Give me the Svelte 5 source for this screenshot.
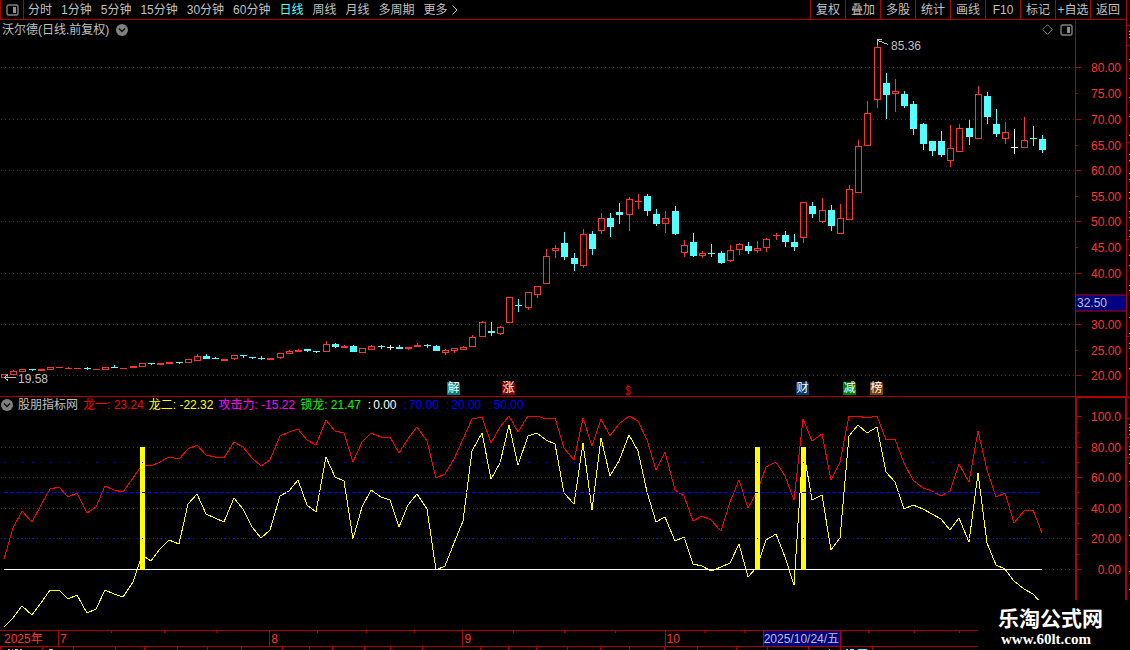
<script>
  const periods = ['分时', '1分钟', '5分钟', '15分钟', '30分钟', '60分钟', '日线', '周线', '月线', '多周期'];
  const tools = ['复权', '叠加', '多股', '统计', '画线', 'F10', '标记', '+自选', '返回'];
  let active = $state('日线');

  // Drawing space of the two plots; both stretch with the window.
  const W = 1075;
  const PRICE_H = 376;
  const IND_H = 233;
  const STEP = 9.186;
  const px = (i) => Math.round(4 + STEP * i);

  // kind, body top, body bottom, high, low (plot rows)
  const candles = [
    'r 354 358', 'r 351 355 350', 'r 349 352', 'c 349 350 349 351', 'r 349 351', 'r 347 350', 'r 347 348',
    'r 348 349 347', 'r 348 349', 'c 348 349 347 350', 'r 349 350', 'r 347 350', 'c 347 348 345', 'r 348 349',
    'r 346 348', 'r 343 347', 'c 343 344 343 345', 'r 343 345', 'r 342 344', 'c 342 343 342 344', 'r 339 343',
    'r 336 341 334', 'c 336 339 334', 'c 338 339 337', 'r 339 341', 'r 335 339 335 340', 'c 335 336 335 338',
    'c 337 338 337 339', 'c 338 339 336 340', 'r 338 340', 'r 333 338 333 339', 'r 331 334 330', 'r 330 332 329',
    'c 329 331 329 332', 'c 331 332 331 333', 'r 324 332 321', 'c 324 327 323 328', 'r 326 328 325',
    'c 326 332 325', 'r 328 333', 'r 326 330 325', 'c 326 327 325 329', 'w 327 328 325 330', 'c 327 329 325',
    'r 327 329 327 330', 'r 325 327 323', 'c 325 326 324 328', 'c 326 331 325', 'r 330 333 329 335',
    'r 328 331 328 333', 'r 327 330 326', 'r 317 327 315', 'r 302 317 301', 'c 311 313 302 316',
    'r 307 314 306 315', 'r 277 303', 'c 285 286 279 292', 'r 272 288 272 290', 'r 266 275 266 278',
    'r 236 264 229', 'r 228 231 225 238', 'c 223 237 212 240', 'c 238 244 233 251', 'r 214 246 209 248',
    'c 214 229 211 235', 'r 198 211 193 214', 'c 198 207 193 217', 'c 192 195 183 204', 'r 179 195 177 211',
    'r 181 182 174 189', 'c 176 191 174 196', 'c 194 204 189 206', 'r 198 204 191 213', 'c 191 214 186 215',
    'r 225 233 220 237', 'c 222 236 213 237', 'r 233 236 231 238', 'c 233 234 224 237', 'c 233 243 231 244',
    'r 230 241 225 242', 'r 224 230 223 235', 'c 226 231 222 234', 'r 228 231 221 233', 'r 219 228 218 232',
    'r 215 216 213 220', 'c 215 222 211 227', 'c 222 227 214 231', 'r 182 218 182 223', 'c 186 194 182 198',
    'r 190 202 178 203', 'c 190 206 185 211', 'r 198 214 184', 'r 169 200 165', 'r 126 173 120', 'r 93 126 81',
    'r 27 80 23 88', 'c 63 75 53 99', 'r 71 74 59 92', 'c 74 86 71 88', 'c 84 109 81 115', 'c 104 124 103 130',
    'c 121 131 121 136', 'c 121 135 111 137', 'r 128 141 105 147', 'r 108 132 104', 'c 108 117 100 125',
    'r 74 119 66', 'c 76 97 72 104', 'c 104 114 89 117', 'r 112 119 102 124', 'w 127 128 109 134',
    'r 120 128 97', 'c 118 119 106 126', 'c 119 130 115 133'
  ].map((row, i) => {
    const [kind, t, b, h, l] = row.split(' ');
    const top = +t, bottom = +b;
    return { kind, x: px(i), top, bottom, high: h ? +h : top, low: l ? +l : bottom };
  });

  // Oscillator samples, in thirds of a plot row below the legend's top edge
  const fast = [
    476, 385, 334, 367, 315, 266, 262, 290, 278, 339, 320, 257, 270, 275, 235, 195, 199, 185, 172, 178, 147, 136,
    166, 170, 175, 127, 142, 174, 199, 180, 107, 97, 88, 121, 135, 61, 93, 98, 185, 127, 100, 112, 112, 160, 116,
    82, 122, 235, 221, 178, 118, 56, 52, 128, 80, 49, 97, 49, 49, 58, 55, 145, 181, 53, 139, 58, 109, 73, 49, 62,
    121, 211, 157, 271, 287, 363, 349, 360, 394, 307, 239, 325, 275, 200, 187, 229, 301, 58, 124, 103, 241, 187,
    49, 49, 55, 49, 121, 118, 190, 241, 265, 274, 289, 274, 193, 247, 94, 209, 292, 280, 370, 334, 331, 398
  ];
  const slow = [
    680, 655, 619, 646, 610, 569, 569, 596, 586, 639, 626, 571, 583, 592, 545, 465, 484, 448, 421, 433, 313, 281,
    343, 353, 367, 295, 328, 382, 413, 390, 287, 274, 241, 315, 337, 172, 232, 244, 417, 321, 270, 291, 299, 382,
    316, 281, 328, 511, 497, 430, 363, 154, 100, 238, 190, 76, 196, 109, 100, 119, 131, 278, 313, 130, 331, 115,
    229, 184, 106, 154, 277, 367, 350, 424, 410, 492, 497, 514, 502, 488, 433, 532, 500, 421, 403, 472, 556, 140,
    301, 286, 451, 415, 109, 76, 100, 82, 217, 247, 328, 316, 328, 341, 358, 391, 355, 427, 220, 430, 496, 506,
    544, 568, 583, 612
  ];
  const toPoints = (list) => list.map((v, i) => `${px(i)},${Math.round(v / 3) + 3}`).join(' ');

  const priceTicks = [
    ['80.00', 47], ['75.00', 73], ['70.00', 99], ['65.00', 125], ['60.00', 150], ['55.00', 176],
    ['50.00', 201], ['45.00', 227], ['40.00', 253], ['30.00', 304], ['25.00', 330], ['20.00', 355]
  ].map(([label, y]) => ({ label, y, major: label.endsWith('0.00') }));
  const indTicks = [['100.0', 19], ['80.00', 50], ['60.00', 80], ['40.00', 111], ['20.00', 141], ['0.00', 172]];
  const indMinor = [35, 65, 95, 126, 157];

  const legend = [
    ['龙一: 23.24', 'red'], ['龙二: -22.32', 'yellow'], ['攻击力: -15.22', 'magenta'], ['锁龙: 21.47', 'lime']
  ];
  const levels = [['0.00', 'white'], ['70.00', 'blue'], ['20.00', 'blue'], ['50.00', 'blue']];

  const badges = [['解', 453, '#008080'], ['涨', 508, '#800000'], ['财', 802, '#003c70'], ['减', 849, '#008000'], ['榜', 876, '#804000']];

  const months = [['2025年', 58], ['7', 211], ['8', 193], ['9', 202], ['10', 314]];
  const weekTicks = [111, 164, 216, 317, 366, 414, 513, 563, 614, 703, 743, 867, 913, 958];
  const tabTicks = [0, 42, 73, 115, 144, 177, 207, 241, 282, 309, 332, 364, 390, 422, 480, 508, 536, 566, 599, 628, 663, 696, 735, 766, 807, 839, 871];
  const sideRules = [25, 45, 142, 239, 336, 397, 418, 437, 457];
  const sideMarks = [31, 34, 37, 59, 78, 97, 116, 135, 154, 160, 173, 179, 192, 198, 211, 217, 230, 236, 255, 265, 285, 290, 317, 333, 343, 348, 368, 424, 427, 430, 434, 446, 449, 454, 463, 481, 517, 535, 571, 589];
</script>

{#snippet panelIcon()}
  <svg width="13" height="12" viewBox="0 0 13 12" aria-hidden="true">
    <rect x="1" y="1" width="11" height="10" rx="1.5" fill="none" stroke="#808080" stroke-width="1.4" />
    <rect x="7" y="3" width="3" height="6" fill="#909090" />
  </svg>
{/snippet}

{#snippet roundIcon()}
  <svg width="12" height="12" viewBox="0 0 12 12" aria-hidden="true">
    <circle cx="6" cy="6" r="6" fill="#808080" />
    <path d="M3 4.5 6 7.5 9 4.5" fill="none" stroke="#111" stroke-width="1.4" />
  </svg>
{/snippet}

<div class="app">
  <div class="main">
    <header class="toolbar">
      <button class="panel-toggle" aria-label="侧栏">{@render panelIcon()}</button>
      <nav class="periods">
        {#each periods as p}
          <button class:active={active === p} onclick={() => (active = p)}>{p}</button>
        {/each}
        <button class="more">更多
          <svg width="6" height="10" viewBox="0 0 6 10" aria-hidden="true"><path d="M.5 .5 5 5 .5 9.5" fill="none" stroke="#c0c0c0" /></svg>
        </button>
      </nav>
      <div class="tools">
        {#each tools as t}<button>{t}</button>{/each}
      </div>
    </header>

    <section class="pane price">
      <div class="plot">
        <svg class="canvas" viewBox="0 0 {W} {PRICE_H}" preserveAspectRatio="none" shape-rendering="crispEdges" aria-hidden="true">
          {#each priceTicks.filter((t) => t.major) as t}
            <line x1="1" x2={W} y1={t.y + 0.5} y2={t.y + 0.5} class="dots" />
          {/each}
          {#each candles as c}
            <g class={c.kind}>
              {#if c.high < c.top}<rect x={c.x} y={c.high} width="1" height={c.top - c.high} />{/if}
              {#if c.low > c.bottom}<rect x={c.x} y={c.bottom} width="1" height={c.low - c.bottom} />{/if}
              {#if c.kind === 'r' && c.bottom - c.top > 2}
                <rect class="hollow" x={c.x - 2.5} y={c.top + 0.5} width="6" height={c.bottom - c.top - 1} />
              {:else}
                <rect x={c.x - 3} y={c.top} width="7" height={c.bottom - c.top} />
              {/if}
            </g>
          {/each}
          <path class="pointer" d="M4 357.5H16M8 354.5 4.500 357.500 8 360.500" />
          <path class="pointer" d="M878 20.500 888 24.500M882 19.500H877.500V25" />
          <path d="M630.500 367.500C629.500 365.800 625.800 366 626 368.200C626.200 370.500 630.500 370 630.500 372.500C630.500 375 626.500 375 625.500 373M628 364.500V376M625 376.500H631" fill="none" stroke="#f00" shape-rendering="geometricPrecision" />
        </svg>
        <div class="title">
          <span>沃尔德(日线.前复权)</span>
          <button aria-label="展开">{@render roundIcon()}</button>
          <div class="corner">
            <button aria-label="标注">
              <svg width="11" height="11" viewBox="0 0 11 11" aria-hidden="true"><path d="M5.500 .7 10.300 5.500 5.500 10.300 .7 5.500Z" fill="none" stroke="#808080" /></svg>
            </button>
            <button aria-label="面板">{@render panelIcon()}</button>
          </div>
        </div>
        <span class="mark" style="left:{(18 / W) * 100}%;top:{(359 / PRICE_H) * 100}%">19.58</span>
        <span class="mark" style="left:{(891 / W) * 100}%;top:{(26 / PRICE_H) * 100}%">85.36</span>
        {#each badges as [label, x, color]}
          <span class="badge" style="left:{(x / W) * 100}%;background:{color}">{label}</span>
        {/each}
      </div>
      <div class="axis">
        {#each priceTicks as t}
          <i class:major={t.major} style="top:{(t.y / PRICE_H) * 100}%"></i>
          <span class="label" style="top:{((t.y + 1) / PRICE_H) * 100}%">{t.label}</span>
        {/each}
        <span class="cursor-value" style="top:{(283.5 / PRICE_H) * 100}%">32.50</span>
      </div>
    </section>

    <section class="pane indicator">
      <div class="plot">
        <svg class="canvas" viewBox="0 0 {W} {IND_H}" preserveAspectRatio="none" shape-rendering="crispEdges" aria-hidden="true">
          {#each indTicks.slice(1) as [, y]}
            <line x1="1" x2={W} y1={y + 0.5} y2={y + 0.5} class="dots" />
          {/each}
          <polyline points={toPoints(fast)} fill="none" stroke="#f00" />
          <polyline points={toPoints(slow)} fill="none" stroke="#ff0" />
          <line x1="4" x2="1042" y1="172.500" y2="172.500" stroke="#fff" />
          {#each [15, 82, 87] as i}
            <rect x={px(i) - 2} y="50" width="5" height="123" fill="#ff0" />
          {/each}
          <line x1="4" x2="1042" y1="95.500" y2="95.500" stroke="#00f" stroke-dasharray="4 2" />
          {#each candles as c}
            <rect x={c.x} y="65" width="1" height="1" fill="#00f" />
            <rect x={c.x} y="141" width="1" height="1" fill="#00f" />
          {/each}
        </svg>
        <div class="legend">
          <button aria-label="指标菜单">{@render roundIcon()}</button>
          <span>股朋指标网</span>
          {#each legend as [text, tone]}<span class={tone}>{text}</span>{/each}
          <div class="levels">
            {#each levels as [value, tone]}<span class="level {tone}"><b>:</b>{value}</span>{/each}
          </div>
        </div>
      </div>
      <div class="axis">
        {#each indTicks as [label, y]}
          <i class="major" style="top:{(y / IND_H) * 100}%"></i>
          <span class="label" style="top:{((y + 1) / IND_H) * 100}%">{label}</span>
        {/each}
        {#each indMinor as y}<i style="top:{(y / IND_H) * 100}%"></i>{/each}
      </div>
    </section>

    <div class="dates">
      {#each months as [label, span]}<span class="month" style="flex-grow:{span}">{label}</span>{/each}
      {#each weekTicks as x}<i style="left:{(x / 1126) * 100}%"></i>{/each}
      <span class="cursor-date" style="left:{(762 / 1126) * 100}%">2025/10/24/五</span>
    </div>
    <div class="tabs">
      <svg viewBox="0 0 1126 3" preserveAspectRatio="none" shape-rendering="crispEdges" aria-hidden="true">
        {#each tabTicks as x}<rect {x} y="0" width="1" height="3" fill="#b00000" />{/each}
        <path d="M8 2.500h2M12 2.500h1M15 2.500h3M20 2.500h2M49 2.500h4M828 2.500h1" stroke="#c0c0c0" />
        <path d="M845 2.500h2M849 2.500h4M857 2.500h9" stroke="#54ffff" />
      </svg>
    </div>
  </div>

  <aside class="side" aria-hidden="true">
    <svg viewBox="0 0 3 650" preserveAspectRatio="none" shape-rendering="crispEdges">
      {#each sideRules as y}<rect x="0" {y} width="3" height="1" fill="#b00000" />{/each}
      {#each sideMarks as y}<rect x="2" {y} width="1" height="1" fill="#c0c0c0" />{/each}
    </svg>
  </aside>

  <footer class="brand">
    <strong>乐淘公式网</strong>
    <span>www.60lt.com</span>
  </footer>
</div>

<style>
  :global(body) {
    margin: 0;
    background: #000;
  }
  .app {
    position: relative;
    display: flex;
    height: 100vh;
    min-height: 400px;
    overflow: hidden;
    background: #000;
    color: #c0c0c0;
    font: 12px/16px 'Liberation Sans', 'Noto Sans CJK SC', sans-serif;
    white-space: nowrap;
  }
  .main {
    flex: 1;
    min-width: 0;
    display: flex;
    flex-direction: column;
  }
  button {
    display: flex;
    align-items: center;
    justify-content: center;
    margin: 0;
    padding: 0;
    border: 0;
    background: none;
    color: inherit;
    font: inherit;
    cursor: pointer;
  }
  .toolbar {
    display: flex;
    height: 19px;
    border-bottom: 1px solid #b00000;
    border-right: 1px solid #b00000;
  }
  .panel-toggle {
    width: 24px;
    box-sizing: border-box;
    border-left: 1px solid #b00000;
    border-right: 1px solid #b00000;
  }
  .periods {
    flex: 1;
    display: flex;
    gap: 9px;
    padding-left: 4px;
  }
  .periods .active {
    color: #54ffff;
  }
  .more {
    gap: 4px;
  }
  .tools {
    display: flex;
    padding-right: 1px;
  }
  .tools button {
    width: 35px;
    box-sizing: border-box;
    border-left: 1px solid #b00000;
  }
  .pane {
    display: grid;
    grid-template-columns: minmax(0, 1fr) 52px;
    min-height: 0;
  }
  .price {
    flex: 376 1 0;
    border-bottom: 1px solid #b00000;
  }
  .indicator {
    flex: 233 1 0;
  }
  .plot,
  .axis {
    position: relative;
  }
  .canvas {
    position: absolute;
    inset: 0;
    width: 100%;
    height: 100%;
  }
  .dots {
    stroke: #b00000;
    stroke-dasharray: 1 3;
  }
  .r {
    fill: #ff3232;
  }
  .r .hollow {
    fill: none;
    stroke: #ff3232;
  }
  .c {
    fill: #54ffff;
  }
  .w {
    fill: #fff;
  }
  .pointer {
    fill: none;
    stroke: #c0c0c0;
  }
  .title,
  .legend {
    position: relative;
    display: flex;
    align-items: center;
  }
  .title {
    gap: 7px;
    height: 19px;
    padding-left: 2px;
  }
  .corner {
    display: flex;
    gap: 7px;
    margin-left: auto;
    padding-right: 2px;
  }
  .mark {
    position: absolute;
    transform: translateY(-50%);
  }
  .badge {
    position: absolute;
    bottom: 1px;
    width: 13px;
    height: 13px;
    margin-left: -6px;
    border-top-right-radius: 2px;
    color: #fff;
    line-height: 13px;
    text-align: center;
  }
  .axis {
    border-left: 1px solid #b00000;
    border-right: 1px solid #b00000;
    color: #ff3232;
  }
  .indicator .axis {
    border-left-width: 2px;
    border-right-width: 2px;
    box-shadow: inset 0 1px #b00000;
  }
  .axis i {
    position: absolute;
    left: 0;
    width: 2px;
    height: 1px;
    background: #b00000;
  }
  .axis .major {
    width: 5px;
  }
  .label {
    position: absolute;
    right: 5px;
    transform: translateY(-50%);
  }
  .indicator .label {
    right: 4px;
  }
  .cursor-value {
    position: absolute;
    left: 0;
    right: 0;
    padding-left: 1px;
    border-top: 1px solid #b00000;
    border-bottom: 1px solid #b00000;
    background: #000080;
    color: #c0c0c0;
    line-height: 15px;
    transform: translateY(-50%);
  }
  .legend {
    gap: 5px;
    height: 16px;
    padding-left: 1px;
  }
  .levels {
    display: flex;
    gap: 7px;
    padding-left: 2px;
  }
  .level {
    display: flex;
    gap: 2px;
  }
  .level b {
    font-weight: normal;
  }
  .red {
    color: #f00;
  }
  .yellow {
    color: #ff0;
  }
  .magenta {
    color: #f0f;
  }
  .lime {
    color: #0f0;
  }
  .white {
    color: #fff;
  }
  .blue {
    color: #00f;
  }
  .dates {
    position: relative;
    display: flex;
    height: 15px;
    border-top: 1px solid #b00000;
    border-bottom: 1px solid #b00000;
    color: #ff3232;
    line-height: 16px;
  }
  .dates::after {
    content: '';
    flex: 148 1 0;
  }
  .month {
    flex: 1 1 0;
    min-width: 0;
    text-indent: 2px;
    box-shadow: inset 1px 0 #b00000;
  }
  .month:first-child {
    text-indent: 4px;
    box-shadow: none;
  }
  .dates i {
    position: absolute;
    top: 0;
    width: 1px;
    height: 2px;
    background: #b00000;
  }
  .cursor-date {
    position: absolute;
    top: 0;
    bottom: 0;
    padding-right: 1px;
    border-left: 1px solid #b00000;
    border-right: 1px solid #b00000;
    background: #000080;
    color: #c0c0c0;
  }
  .tabs {
    height: 3px;
  }
  .tabs svg,
  .side svg {
    display: block;
    width: 100%;
    height: 100%;
  }
  .side {
    width: 3px;
  }
  .brand {
    position: absolute;
    right: 0;
    bottom: 0;
    display: flex;
    flex-direction: column;
    gap: 2px;
    box-sizing: border-box;
    width: 152px;
    height: 50px;
    padding: 6px 0 0 20px;
    background: #000;
    color: #fff;
  }
  .brand strong {
    font: bold 21px/22px 'Noto Sans CJK SC', sans-serif;
  }
  .brand span {
    padding-left: 3px;
    font: bold 15px/18px 'Liberation Serif', serif;
  }
</style>
